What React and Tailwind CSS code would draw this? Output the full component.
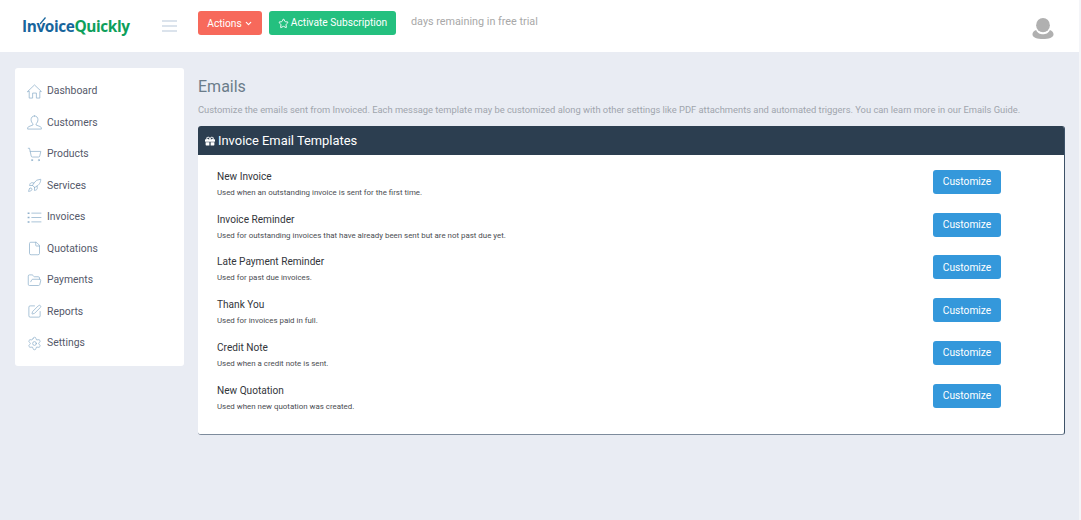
import { ChevronDown, Star, ShoppingCart, Rocket, File, FolderOpen, SquarePen, Settings } from "lucide-react";
import { FaGift } from "react-icons/fa";

function HomeIcon(props) {
  return (
    <svg {...props} viewBox="0 0 24 24" fill="none" stroke="currentColor" strokeLinejoin="round" strokeLinecap="round">
      <path d="M1 12 L12 1.5 L23 12 L20.5 12 L20.5 22.5 L15 22.5 L15 14.5 L9 14.5 L9 22.5 L3.5 22.5 L3.5 12 Z" />
    </svg>
  );
}

function UserIcon(props) {
  return (
    <svg {...props} viewBox="0 0 24 24" fill="none" stroke="currentColor" strokeLinejoin="round" strokeLinecap="round">
      <path d="M12 1.5 C8.5 1.5 6.5 4 6.5 7.5 C6.5 10.5 8 13 9.5 14 L9.5 16 L3 18.5 C1.5 19 1 20 1 22.5 L23 22.5 C23 20 22.5 19 21 18.5 L14.5 16 L14.5 14 C16 13 17.5 10.5 17.5 7.5 C17.5 4 15.5 1.5 12 1.5 Z" />
    </svg>
  );
}

function ListIcon(props) {
  return (
    <svg {...props} viewBox="0 0 24 24" fill="none" stroke="currentColor">
      <path d="M7 5 H23 M7 12 H23 M7 19 H23" />
      <path d="M1 5 H4 M1 12 H4 M1 19 H4" strokeWidth="2.4" />
    </svg>
  );
}

const navItems = [
  { label: "Dashboard", icon: HomeIcon },
  { label: "Customers", icon: UserIcon },
  { label: "Products", icon: ShoppingCart },
  { label: "Services", icon: Rocket },
  { label: "Invoices", icon: ListIcon },
  { label: "Quotations", icon: File },
  { label: "Payments", icon: FolderOpen },
  { label: "Reports", icon: SquarePen },
  { label: "Settings", icon: Settings },
];

const templates = [
  { title: "New Invoice", text: "Used when an outstanding invoice is sent for the first time." },
  { title: "Invoice Reminder", text: "Used for outstanding invoices that have already been sent but are not past due yet." },
  { title: "Late Payment Reminder", text: "Used for past due invoices." },
  { title: "Thank You", text: "Used for invoices paid in full." },
  { title: "Credit Note", text: "Used when a credit note is sent." },
  { title: "New Quotation", text: "Used when new quotation was created." },
];

function Avatar() {
  return (
    <svg width="22" height="23" viewBox="0 0 24 24" preserveAspectRatio="none" className="text-[#b0b0b0]">
      <circle cx="12" cy="8.5" r="7.5" fill="currentColor" />
      <path d="M4.5 13.5 C6 17 9 18 12 18 C15 18 18 17 19.5 13.5 C22 14.5 23.5 16 23.5 18 C23.5 21.5 18 23 12 23 C6 23 .5 21.5 .5 18 C.5 16 2 14.5 4.5 13.5 Z" fill="currentColor" />
    </svg>
  );
}

export default function App() {
  return (
    <div className="flex min-h-[520px] bg-[#e9ecf3] font-['Roboto',sans-serif]">
      <div className="min-w-0 flex-1">
        <header className="flex h-[52px] bg-white">
          <div className="flex h-[52px] w-[198px] shrink-0 items-center">
            <div className="ml-[22px] flex w-[140px] pt-px font-['Open_Sans',sans-serif] text-[15.4px] font-bold tracking-[-0.4px]">
              <span className="text-[#17659c]">In</span>
              <span className="relative text-[#17659c]">
                v
                <svg width="6" height="8" viewBox="0 0 6 8" className="absolute top-[2px] left-[4px]">
                  <path d="M0 7 L5.5 0.5" stroke="#17659c" strokeWidth="1.2" fill="none" />
                </svg>
              </span>
              <span className="text-[#17659c]">oice</span>
              <span className="text-[#0e9f5b]">Quickly</span>
            </div>
            <div className="flex w-[15px] flex-col gap-[3px]">
              <span className="h-[2px] bg-[#dbe3ec]" />
              <span className="h-[2px] bg-[#dbe3ec]" />
              <span className="h-[2px] bg-[#dbe3ec]" />
            </div>
          </div>
          <div className="flex flex-1 items-start gap-[7px] pt-[11px]">
            <button className="flex h-6 w-[64px] items-center justify-center gap-[2px] rounded-[3px] bg-[#f7695b] pt-px text-[10.2px] text-white">
              Actions <ChevronDown size={9} strokeWidth={3} />
            </button>
            <button className="flex h-6 w-[127px] items-center justify-center gap-[2px] rounded-[3px] bg-[#24c07f] text-[10.2px] text-white">
              <Star size={11} strokeWidth={2} /> Activate Subscription
            </button>
            <span className="ml-[8px] pt-[3px] text-[10.8px] text-[#a8a8a8]">days remaining in free trial</span>
          </div>
          <div className="mr-[25px] flex items-center pt-[4px]">
            <Avatar />
          </div>
        </header>

        <div className="flex items-start pt-4 pr-[14px] pl-[15px]">
          <aside className="w-[169px] shrink-0 rounded-[3px] bg-white pt-[7.3px] pb-[7px]">
            {navItems.map(({ label, icon: Icon }) => (
              <div key={label} className="flex h-[31.5px] items-center gap-[5px] pl-3">
                <Icon width={15} height={15} strokeWidth={1.2} className="text-[#8fb0cb]" />
                <span className="text-[10.4px] text-[#55596a]">{label}</span>
              </div>
            ))}
          </aside>

          <main className="ml-[14px] min-w-0 flex-1">
            <h1 className="mt-[9px] text-[16px] leading-5 text-[#6b7c8a]">Emails</h1>
            <p className="mt-[6px] whitespace-nowrap text-[9.36px] leading-[14px] text-[#a0a5ad]">
              Customize the emails sent from Invoiced. Each message template may be customized along with other settings like PDF attachments and automated triggers. You can learn more in our Emails Guide.
            </p>
            <section className="mt-[9px] overflow-hidden rounded-[3px] border-r border-b border-r-[#3d5268] border-b-[#7d8b9c] bg-white">
              <div className="flex h-[29px] items-center gap-[3px] bg-[#2c3e50] pl-[7px] text-white">
                <FaGift size={10} />
                <h2 className="text-[12.9px]">Invoice Email Templates</h2>
              </div>
              <div className="pt-[15.8px] pb-[6px] pr-[63px] pl-[19px]">
                {templates.map((t) => (
                  <div key={t.title} className="flex h-[42.8px] items-start justify-between">
                    <div>
                      <div className="text-[10.1px] leading-[12px] text-[#33363b]">{t.title}</div>
                      <div className="mt-[4px] text-[7.9px] leading-[12px] text-[#4a4d52]">{t.text}</div>
                    </div>
                    <button className="-mt-px h-6 w-[68px] rounded-[3px] bg-[#3498db] text-[10.2px] text-white">Customize</button>
                  </div>
                ))}
              </div>
            </section>
          </main>
        </div>
      </div>
      <div className="w-[2px] shrink-0 bg-[#f4f5f8]" />
    </div>
  );
}
